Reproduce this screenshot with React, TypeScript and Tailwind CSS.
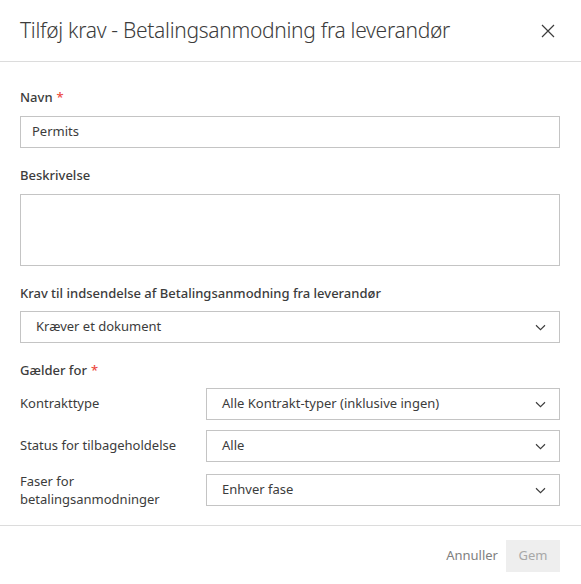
import React from "react";

const font = { fontFamily: '"Noto Sans", "Open Sans", sans-serif' };

function Chevron() {
  return (
    <svg width="11" height="7" viewBox="0 0 11 7" fill="none" className="shrink-0">
      <path d="M1 1.25L5.5 5.75L10 1.25" stroke="#3c3c3c" strokeWidth="1.1" />
    </svg>
  );
}

function Select({ value }: { value: string }) {
  return (
    <div className="flex h-8 items-center justify-between border border-[#c4c4c4] bg-white pl-[15px] pr-[13px] text-[13px] text-[#3c3c3c]">
      <span>{value}</span>
      <Chevron />
    </div>
  );
}

function Label({ children, required }: { children: React.ReactNode; required?: boolean }) {
  return (
    <div className="text-[13px] font-medium leading-[18px] text-[#3c3c3c]">
      {children}
      {required && <span className="ml-1 text-[#ec4a41]">*</span>}
    </div>
  );
}

export default function App() {
  return (
    <div className="w-[581px] bg-white" style={font}>
      <div className="flex h-[62px] items-center justify-between border-b border-[#dcdcdc] pl-5 pr-[26px]">
        <h1 className="text-[21px] font-light tracking-[-0.3px] text-[#3c3c3c]">
          Tilføj krav - Betalingsanmodning fra leverandør
        </h1>
        <svg width="14" height="14" viewBox="0 0 14 14">
          <path d="M1 1L13 13M13 1L1 13" stroke="#3c3c3c" strokeWidth="1.2" />
        </svg>
      </div>

      <div className="pl-5 pr-[21px] pt-[26px] pb-[17px]">
        <Label required>Navn</Label>
        <div className="mt-[10px] flex h-8 items-center border border-[#c4c4c4] px-[11px] text-[13px] text-[#3c3c3c]">
          Permits
        </div>

        <div className="mt-[18px]">
          <Label>Beskrivelse</Label>
        </div>
        <div className="mt-[10px] h-[72px] border border-[#c4c4c4]" />

        <div className="mt-[18px]">
          <Label>Krav til indsendelse af Betalingsanmodning fra leverandør</Label>
        </div>
        <div className="mt-[9px]">
          <Select value="Kræver et dokument" />
        </div>

        <div className="mt-[18px]">
          <Label required>Gælder for</Label>
        </div>

        <div className="mt-[9px] grid grid-cols-[186px_1fr] items-center gap-y-[10px] text-[13px] text-[#3c3c3c]">
          <div>Kontrakttype</div>
          <Select value="Alle Kontrakt-typer (inklusive ingen)" />
          <div>Status for tilbageholdelse</div>
          <Select value="Alle" />
          <div className="leading-[18px]">
            Faser for
            <br />
            betalingsanmodninger
          </div>
          <Select value="Enhver fase" />
        </div>
      </div>

      <div className="flex items-center justify-end gap-2 border-t border-[#dcdcdc] pl-5 pr-[21px] pt-[14px] pb-[13px] text-[13px]">
        <span className="text-[#808080]">Annuller</span>
        <div className="flex h-8 w-[54px] items-center justify-center bg-[#eeeeee] text-[#a8a8a8]">Gem</div>
      </div>
    </div>
  );
}
